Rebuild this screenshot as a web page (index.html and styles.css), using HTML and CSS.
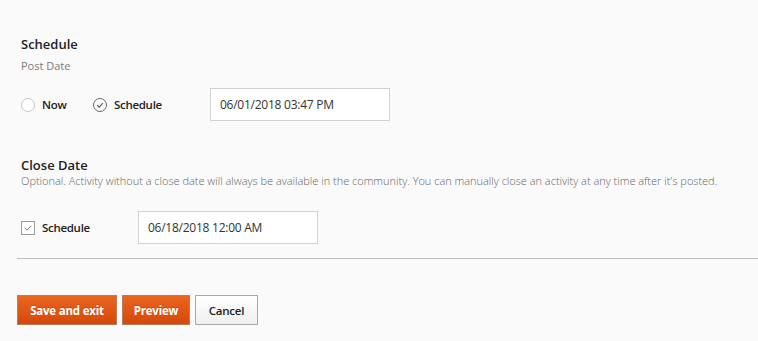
FILE: index.html
```html
<!DOCTYPE html>
<html lang="en">
<head>
<meta charset="utf-8">
<title>Schedule</title>
<link rel="stylesheet" href="styles.css">
</head>
<body>
<div class="page">
  <section class="section section-post">
    <h2 class="heading">Schedule</h2>
    <p class="sub">Post Date</p>
    <div class="row">
      <label class="option option-now">
        <span class="radio"></span>
        <span class="label">Now</span>
      </label>
      <label class="option option-wide">
        <span class="radio radio-checked">
          <svg viewBox="0 0 14 14" width="14" height="14"><path d="M4.2 7.2 L6.2 9.1 L9.9 5" fill="none" stroke="#555" stroke-width="1.1"/></svg>
        </span>
        <span class="label">Schedule</span>
      </label>
      <div class="field">06/01/2018 03:47 PM</div>
    </div>
  </section>

  <section class="section section-close">
    <h2 class="heading">Close Date</h2>
    <p class="desc">Optional. Activity without a close date will always be available in the community. You can manually close an activity at any time after it's posted.</p>
    <div class="row">
      <label class="option option-wide">
        <span class="checkbox">
          <svg viewBox="0 0 14 14" width="14" height="14"><path d="M3.8 7 L6 9.1 L10.2 4.8" fill="none" stroke="#777" stroke-width="1"/></svg>
        </span>
        <span class="label">Schedule</span>
      </label>
      <div class="field">06/18/2018 12:00 AM</div>
    </div>
  </section>
</div>
<hr class="divider">
<div class="actions">
  <button class="btn btn-primary btn-save">Save and exit</button>
  <button class="btn btn-primary btn-preview">Preview</button>
  <button class="btn btn-default btn-cancel">Cancel</button>
</div>
</body>
</html>
```

FILE: styles.css
```css
* { box-sizing: border-box; }

html, body {
  margin: 0;
  padding: 0;
  background: #fafafa;
}

body {
  font-family: "Open Sans", "Noto Sans", "Liberation Sans", sans-serif;
  color: #222;
}

.page {
  padding: 36px 0 0 21px;
}

.section { margin: 0; }

.section-close { margin-top: 36px; }

.heading {
  margin: 0;
  font-size: 13px;
  line-height: 16px;
  font-weight: 600;
  color: #222;
}

.sub {
  margin: 7px 0 0;
  font-size: 11px;
  line-height: 14px;
  color: #7a7a7a;
}

.desc {
  margin: 1px 0 0;
  font-size: 11px;
  line-height: 14px;
  font-weight: 300;
  color: #666;
  letter-spacing: -0.015px;
  white-space: nowrap;
}

.section-post .row { margin-top: 15px; }
.section-close .row { margin-top: 23px; }

.row {
  display: flex;
  align-items: center;
  height: 33px;
}

.option {
  display: flex;
  align-items: center;
  gap: 7px;
}

.option-now { width: 72px; }
.option-wide { width: 117px; }

.label {
  font-size: 11.5px;
  font-weight: 600;
  letter-spacing: -0.3px;
  color: #222;
}

.radio {
  width: 14px;
  height: 14px;
  border: 1px solid #c8c8c8;
  border-radius: 50%;
  background: #fff;
  position: relative;
  flex: none;
}

.radio-checked {
  border-color: #6a6a6a;
  background: transparent;
}

.radio svg, .checkbox svg {
  position: absolute;
  left: -1px;
  top: -1px;
}

.checkbox {
  width: 14px;
  height: 14px;
  border: 1px solid #9a9a9a;
  background: #fff;
  position: relative;
  flex: none;
}

.field {
  width: 180px;
  height: 33px;
  border: 1px solid #d2d2d2;
  background: #fff;
  padding-left: 9px;
  display: flex;
  align-items: center;
  font-size: 12px;
  letter-spacing: -0.25px;
  color: #333;
}

.divider {
  margin: 14px 0 0 17px;
  border: 0;
  border-top: 1px solid #bdbdbd;
  height: 0;
}

.actions {
  display: flex;
  gap: 5px;
  padding: 36px 0 0 17px;
}

.btn {
  height: 30px;
  font-family: "Open Sans", "Noto Sans", "Liberation Sans", sans-serif;
  font-size: 11.5px;
  font-weight: 700;
  letter-spacing: -0.2px;
  padding: 0;
  border-radius: 0;
  cursor: pointer;
}

.btn-primary {
  color: #fff;
  background: linear-gradient(#eb6420, #d4490b);
  border: 1px solid #b57e5c;
  text-shadow: 0 -1px 0 rgba(120, 40, 0, 0.3);
}

.btn-save { width: 100px; }
.btn-preview { width: 68px; }

.btn-default {
  color: #222;
  background: linear-gradient(#ffffff, #efefef);
  border: 1px solid #a9a9a9;
  font-weight: 600;
}

.btn-cancel { width: 63px; }
```
